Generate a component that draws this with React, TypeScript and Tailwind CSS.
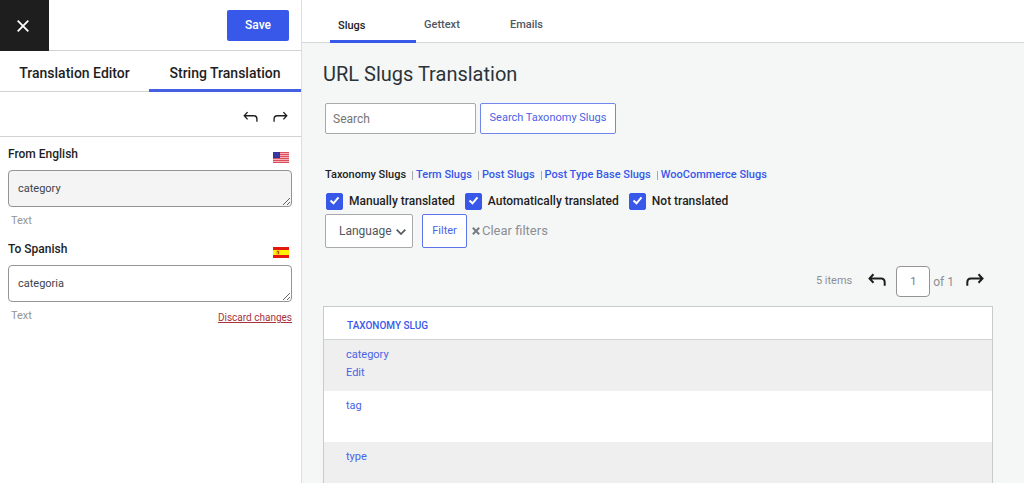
import { useState } from "react";

const views = ["Slugs", "Gettext", "Emails"];

const slugTypes = ["Term Slugs", "Post Slugs", "Post Type Base Slugs", "WooCommerce Slugs"];

const filters = ["Manually translated", "Automatically translated", "Not translated"];

const rows = [
  { slug: "category", editable: true },
  { slug: "tag", editable: false },
  { slug: "type", editable: false }
];

type ArrowIconProps = {
  className?: string;
};

function PreviousIcon({ className }: ArrowIconProps) {
  return (
    <svg viewBox="0 0 18 14" fill="none" stroke="currentColor" className={className} aria-hidden="true">
      <path d="M5.500 1.200 1.500 5.500l4 4.300M1.500 5.500h11.500q3.700 0 3.700 4V12.800" />
    </svg>
  );
}

function NextIcon({ className }: ArrowIconProps) {
  return (
    <svg viewBox="0 0 18 14" fill="none" stroke="currentColor" className={className} aria-hidden="true">
      <path d="M12.500 1.200l4 4.300-4 4.300M16.500 5.500H5q-3.700 0-3.700 4V12.800" />
    </svg>
  );
}

function UnitedStatesFlag() {
  return (
    <svg viewBox="0 0 16 11" className="h-[11px] w-4" role="img" aria-label="English">
      <path fill="#f3b3b9" d="M0 0h16v11H0z" />
      <path fill="#dc4c5c" d="M0 0h16v1H0zM0 2h16v1H0zM0 4h16v1H0zM0 6h16v1H0zM0 8h16v1H0zM0 10h16v1H0z" />
      <path fill="#35339b" d="M0 0h7v6H0z" />
      <path fill="#5250ab" d="M1 1h1v1H1zM4 1h1v1H4zM2 3h1v1H2zM5 3h1v1H5z" />
    </svg>
  );
}

function SpainFlag() {
  return (
    <svg viewBox="0 0 16 11" className="h-[11px] w-4" role="img" aria-label="Spanish">
      <path fill="#e8170c" d="M0 0h16v11H0z" />
      <path fill="#fff200" d="M0 3h16v5H0z" />
      <path fill="#e8a02b" d="M3.5 3.5h3v4h-3z" />
      <path fill="#c5501f" d="M4 4h2v1H4zM5 5h1v2H5z" />
    </svg>
  );
}

type StringFieldProps = {
  id: string;
  label: string;
  value: string;
  readOnly?: boolean;
  flag: React.ReactNode;
  action?: React.ReactNode;
};

function StringField({ id, label, value, readOnly, flag, action }: StringFieldProps) {
  return (
    <div className="h-[95px]">
      <div className="flex h-6 items-start justify-between pr-[3px]">
        <label htmlFor={id} className="text-[12px] leading-4 font-medium text-[#1e1e1e]">
          {label}
        </label>
        <span className="pt-[6px]">{flag}</span>
      </div>
      <textarea
        id={id}
        defaultValue={value}
        readOnly={readOnly}
        rows={1}
        className={`block h-[37px] w-full resize-y overflow-hidden rounded-sm border border-[#949494] px-[9px] py-[10px] text-[11px] leading-4 text-[#3c434a] ${
          readOnly ? "bg-[#f4f4f5]" : "bg-white"
        }`}
      />
      <div className="flex justify-between pt-[6px] text-[11px] leading-4">
        <span className="pl-[3px] text-[#949494]">Text</span>
        {action}
      </div>
    </div>
  );
}

function Sidebar() {
  return (
    <aside className="w-[302px] shrink-0 border-r border-[#dcdfe0] bg-white">
      <div className="flex h-[51px] items-center justify-between border-b border-[#d0d3d4] pr-3">
        <button type="button" aria-label="Close" className="flex h-[51px] w-[49px] items-center justify-center bg-[#1e1e1e] pt-[2px] pr-[3px] text-white">
          <svg viewBox="0 0 12 12" fill="none" stroke="currentColor" strokeWidth="1.8" className="size-3" aria-hidden="true">
            <path d="M.7.7l10.6 10.6M11.3.7.7 11.3" />
          </svg>
        </button>
        <button type="button" className="h-[31px] w-[62px] rounded-xs bg-[#3858e9] text-[12px] font-medium text-white">
          Save
        </button>
      </div>

      <nav className="grid h-[41px] grid-cols-[149px_1fr] border-b border-[#d0d3d4] text-[14px] font-medium text-[#1e1e1e]">
        <a href="#editor" className="flex items-center justify-center pt-[5px]">
          Translation Editor
        </a>
        <a href="#strings" className="-mb-px flex items-center justify-center border-b-3 border-[#4560e0] pt-[7px]">
          String Translation
        </a>
      </nav>

      <div className="flex h-[45px] items-center justify-end gap-[15px] border-b border-[#d0d3d4] pt-[5px] pr-[13px] text-[#1e1e1e]">
        <button type="button" aria-label="Previous string">
          <PreviousIcon className="h-3 w-[15px] stroke-[1.6]" />
        </button>
        <button type="button" aria-label="Next string">
          <NextIcon className="h-3 w-[15px] stroke-[1.6]" />
        </button>
      </div>

      <div className="pt-[9px] pr-[9px] pl-2">
        <StringField id="from-english" label="From English" value="category" readOnly flag={<UnitedStatesFlag />} />
        <StringField
          id="to-spanish"
          label="To Spanish"
          value="categoria"
          flag={<SpainFlag />}
          action={
            <button type="button" className="pt-[2px] text-[10px] text-[#a8323a] underline">
              Discard changes
            </button>
          }
        />
      </div>
    </aside>
  );
}

function SlugFilters() {
  return (
    <form onSubmit={(event) => event.preventDefault()}>
      <div className="flex h-[31px] gap-1 pl-[2px]">
        <input
          type="search"
          aria-label="Search"
          placeholder="Search"
          className="w-[151px] rounded-xs border border-[#a7a9ab] bg-white px-[7px] text-[12px] placeholder:text-[#757575]"
        />
        <button type="submit" className="w-[136px] rounded-xs border border-[#7287ec] bg-white text-[11px] text-[#4a63e6]">
          Search Taxonomy Slugs
        </button>
      </div>

      <ul className="flex gap-[6px] pt-[33px] pl-[2px] text-[11px] leading-4 font-medium">
        <li className="text-[#1e1e1e]">Taxonomy Slugs</li>
        {slugTypes.map((type) => (
          <li key={type} className="flex items-center gap-[3px]">
            <span className="h-[9px] w-px bg-[#a7aaad]" />
            <a href="#slugs" className="text-[#3858e9]">
              {type}
            </a>
          </li>
        ))}
      </ul>

      <div className="flex gap-[10px] pt-[10px] pl-[3px]">
        {filters.map((filter) => (
          <label key={filter} className="grid grid-cols-[17px_auto] items-center gap-x-[6px] text-[12px] leading-[17px] font-medium text-[#1e1e1e]">
            <input
              type="checkbox"
              defaultChecked
              className="peer col-start-1 row-start-1 size-[17px] appearance-none rounded-xs border border-[#3858e9] bg-white checked:bg-[#3858e9]"
            />
            <svg
              viewBox="0 0 17 17"
              fill="none"
              stroke="white"
              strokeWidth="2"
              className="pointer-events-none invisible col-start-1 row-start-1 size-[17px] peer-checked:visible"
              aria-hidden="true"
            >
              <path d="M4.5 7.500l3 2.800 5-6" />
            </svg>
            <span>{filter}</span>
          </label>
        ))}
      </div>

      <div className="flex h-[38px] items-center pt-1 pl-[2px]">
        <div className="grid w-[88px] items-center">
          <select
            aria-label="Language"
            className="col-start-1 row-start-1 h-[34px] appearance-none rounded-xs border border-[#a7a9ab] bg-white pr-4 pl-[13px] text-[12px] text-[#50575e]"
          >
            <option>Language</option>
          </select>
          <svg
            viewBox="0 0 10 6"
            fill="none"
            stroke="#50575e"
            strokeWidth="1.7"
            className="pointer-events-none col-start-1 row-start-1 mt-[2px] mr-[7px] h-[6px] w-[10px] justify-self-end"
            aria-hidden="true"
          >
            <path d="M.7.7 5 5 9.300.7" />
          </svg>
        </div>
        <button type="submit" className="ml-[9px] h-[34px] w-[45px] rounded-xs border border-[#5d74ea] bg-white text-[11px] text-[#4a63e6]">
          Filter
        </button>
        <button type="reset" className="ml-[5px] flex items-center gap-[2px] text-[13px] text-[#8c8f94]">
          <svg viewBox="0 0 8 8" stroke="#787c82" strokeWidth="2" className="size-2" aria-hidden="true">
            <path d="M.8.8l6.400 6.400M7.200.8.8 7.200" />
          </svg>
          Clear filters
        </button>
      </div>
    </form>
  );
}

function Pagination() {
  const [page, setPage] = useState("1");

  return (
    <div className="flex h-[31px] items-center justify-end pr-[9px] text-[#8c8f94]">
      <span className="mr-4 text-[11px]">5 items</span>
      <button type="button" aria-label="Previous page" className="mr-[10px] pb-1 text-[#1e1e1e]">
        <PreviousIcon className="h-[14px] w-[18px] stroke-2" />
      </button>
      <input
        type="text"
        aria-label="Current page"
        value={page}
        onChange={(event) => setPage(event.target.value)}
        className="h-[31px] w-[34px] rounded-sm border border-[#949494] bg-white text-center text-[11px] text-[#787c82]"
      />
      <span className="mr-3 ml-[3px] text-[12px]">of 1</span>
      <button type="button" aria-label="Next page" className="pb-1 text-[#1e1e1e]">
        <NextIcon className="h-[14px] w-[18px] stroke-2" />
      </button>
    </div>
  );
}

function SlugTable() {
  return (
    <table className="mt-[9px] w-full border border-[#c8cbcd] bg-white text-left text-[11px]">
      <thead>
        <tr className="h-[33px] border-b border-[#d0d3d4]">
          <th scope="col" className="pt-[5px] pl-[23px] text-[10px] font-medium text-[#3858e9]">
            TAXONOMY SLUG
          </th>
        </tr>
      </thead>
      <tbody>
        {rows.map((row) => (
          <tr key={row.slug} className="h-[51px] align-top odd:bg-[#efefef]">
            <td className="pt-[6px] pl-[22px] leading-[18px] text-[#4a63e6]">
              <a href={`#${row.slug}`} className="block">
                {row.slug}
              </a>
              {row.editable && <button type="button">Edit</button>}
            </td>
          </tr>
        ))}
      </tbody>
    </table>
  );
}

export default function App() {
  const [view, setView] = useState("Slugs");

  return (
    <div className="flex h-screen overflow-hidden bg-[#f5f7f7] font-[Roboto,sans-serif]">
      <Sidebar />
      <main className="min-w-0 flex-1">
        <div className="flex h-[43px] border-b border-[#d5d8d9] bg-white pl-7">
          {views.map((name) => (
            <button
              key={name}
              type="button"
              onClick={() => setView(name)}
              className={`w-[86px] border-b-3 pt-3 pl-2 text-left text-[11px] font-medium ${
                view === name ? "-mb-px border-[#3858e9] text-[#1e1e1e]" : "border-transparent text-[#50575e]"
              }`}
            >
              {name}
            </button>
          ))}
        </div>
        <div className="pr-[31px] pl-[21px]">
          <h1 className="pt-[19px] pb-[17px] text-[20px] leading-6 text-[#2c3338]">URL Slugs Translation</h1>
          <SlugFilters />
          <div className="pt-[18px]">
            <Pagination />
          </div>
          <SlugTable />
        </div>
      </main>
    </div>
  );
}
